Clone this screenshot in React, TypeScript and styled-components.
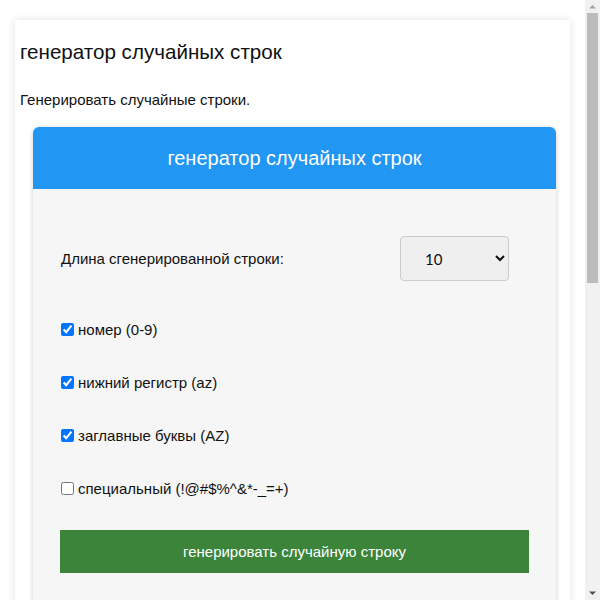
import React, { useState } from "react";
import styled, { createGlobalStyle } from "styled-components";

const GlobalStyle = createGlobalStyle`
  html, body {
    margin: 0;
    padding: 0;
    background: #fff;
    font-family: "Liberation Sans", Arial, sans-serif;
    color: #111;
  }
`;

const Page = styled.div`
  width: calc(100% - 15px);
  min-height: 1266px;
  padding: 20px 15px;
  box-sizing: border-box;
`;

/* classic scrollbar drawn over the right edge, as in the capture */
const ScrollRail = styled.div`
  position: fixed;
  top: 0;
  right: 0;
  width: 15px;
  height: 100vh;
  background: #f1f1f1;
  display: flex;
  flex-direction: column;
  align-items: center;
`;

const ScrollArrow = styled.svg`
  width: 15px;
  height: 13px;
  flex: none;
`;

const ScrollThumb = styled.div`
  width: 11px;
  height: 270px;
  background: #bcbcbc;
  flex: none;
`;

const ScrollSpacer = styled.div`
  flex: 1;
`;

const Sheet = styled.div`
  background: #fff;
  box-shadow: 0 0 8px rgba(0, 0, 0, 0.12);
  padding: 20px 5px 40px;
  min-height: 1180px;
`;

const Title = styled.h2`
  margin: 0 0 28px;
  font-size: 20.6px;
  font-weight: 400;
  line-height: 23px;
`;

const Intro = styled.p`
  margin: 0 0 19px;
  font-size: 15px;
  line-height: 17px;
`;

const Tool = styled.div`
  margin: 0 9px 0 13px;
  border-radius: 6px;
  overflow: hidden;
  background: #f6f6f6;
  box-shadow: 0 1px 5px rgba(0, 0, 0, 0.2);
`;

const ToolHeader = styled.div`
  background: #2196f3;
  color: #fff;
  height: 62px;
  display: flex;
  align-items: center;
  justify-content: center;
  font-size: 20px;
`;

const ToolBody = styled.div`
  padding: 47px 27px 40px;
  display: flex;
  flex-direction: column;
`;

const LengthRow = styled.div`
  display: grid;
  grid-template-columns: 1fr 109px;
  align-items: center;
  padding: 0 20px 0 1px;
  margin-bottom: 40px;
  font-size: 15px;
`;

const Select = styled.select`
  height: 45px;
  width: 109px;
  border: 1px solid #ccc;
  border-radius: 4px;
  background: #efefef;
  font-family: "Lato", "Liberation Sans", sans-serif;
  font-size: 15px;
  color: #111;
  padding: 0 8px 0 20px;
`;

const CheckList = styled.div`
  display: flex;
  flex-direction: column;
  gap: 36px;
  margin-bottom: 33px;
`;

const CheckRow = styled.label`
  display: flex;
  align-items: center;
  font-size: 15px;
  line-height: 17px;
  padding-left: 1px;

  input {
    margin: 0 4px 0 0;
    width: 13px;
    height: 13px;
    accent-color: #0075ff;
  }
`;

const GenerateButton = styled.button`
  height: 43px;
  border: none;
  background: #3b843a;
  color: #fff;
  font-family: "Liberation Sans", Arial, sans-serif;
  font-size: 15px;
  cursor: pointer;
`;

const options = [
  { label: "номер (0-9)", on: true },
  { label: "нижний регистр (az)", on: true },
  { label: "заглавные буквы (AZ)", on: true },
  { label: "специальный (!@#$%^&*-_=+)", on: false },
];

export default function App() {
  const [checks, setChecks] = useState(options.map((o) => o.on));

  return (
    <>
      <GlobalStyle />
      <Page>
        <Sheet>
          <Title>генератор случайных строк</Title>
          <Intro>Генерировать случайные строки.</Intro>
          <Tool>
            <ToolHeader>генератор случайных строк</ToolHeader>
            <ToolBody>
              <LengthRow>
                <span>Длина сгенерированной строки:</span>
                <Select defaultValue="10">
                  {[4, 6, 8, 10, 12, 16, 20, 32].map((n) => (
                    <option key={n} value={String(n)}>
                      {n}
                    </option>
                  ))}
                </Select>
              </LengthRow>
              <CheckList>
                {options.map((o, i) => (
                  <CheckRow key={o.label}>
                    <input
                      type="checkbox"
                      checked={checks[i]}
                      onChange={() =>
                        setChecks((c) => c.map((v, j) => (j === i ? !v : v)))
                      }
                    />
                    {o.label}
                  </CheckRow>
                ))}
              </CheckList>
              <GenerateButton>генерировать случайную строку</GenerateButton>
            </ToolBody>
          </Tool>
        </Sheet>
      </Page>
      <ScrollRail>
        <ScrollArrow viewBox="0 0 15 13">
          <path d="M4 8.5h7L7.5 5z" fill="#a3a3a3" />
        </ScrollArrow>
        <ScrollThumb />
        <ScrollSpacer />
        <ScrollArrow viewBox="0 0 15 13">
          <path d="M4 4.5h7L7.5 8z" fill="#505050" />
        </ScrollArrow>
      </ScrollRail>
    </>
  );
}
